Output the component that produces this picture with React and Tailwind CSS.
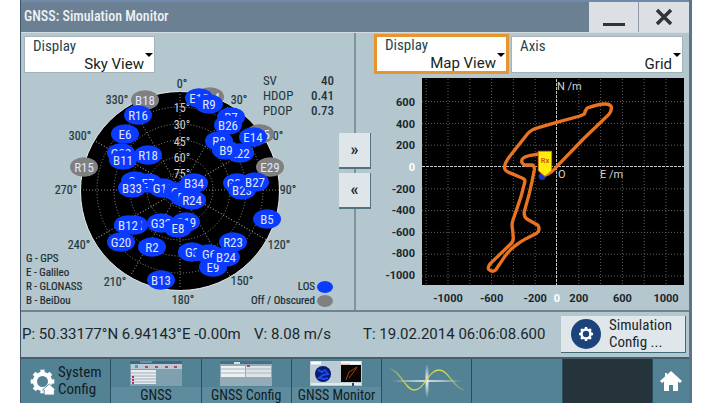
import React, { useState } from "react";

const LOS = "#0b3bff";
const OBSCURED = "#808080";

// Azimuth captions around the sky plot
const azimuths = [
  { text: "0°", x: 182, y: 84 },
  { text: "30°", x: 239, y: 100 },
  { text: "60°", x: 275, y: 136 },
  { text: "90°", x: 288, y: 190 },
  { text: "120°", x: 279, y: 245 },
  { text: "150°", x: 242, y: 281 },
  { text: "180°", x: 183, y: 300 },
  { text: "210°", x: 115, y: 282 },
  { text: "240°", x: 79, y: 245 },
  { text: "270°", x: 66, y: 190 },
  { text: "300°", x: 80, y: 136 },
  { text: "330°", x: 117, y: 100 },
];

const elevations = [
  { text: "15°", y: 108, r: 83 },
  { text: "30°", y: 125, r: 66 },
  { text: "45°", y: 142, r: 50 },
  { text: "60°", y: 158, r: 33 },
  { text: "75°", y: 174, r: 17 },
];

// Painted in this order, later satellites cover earlier ones
const satellites = [
  { id: "B18", x: 145, y: 100, off: true },
  { id: "R16", x: 138, y: 115 },
  { id: "E6", x: 125, y: 134 },
  { id: "G22", x: 121, y: 153 },
  { id: "B11", x: 123, y: 160 },
  { id: "R18", x: 148, y: 155 },
  { id: "R15", x: 84, y: 167, off: true },
  { id: "G1", x: 135, y: 181 },
  { id: "E7", x: 148, y: 183 },
  { id: "B33", x: 132, y: 188 },
  { id: "G11", x: 163, y: 188 },
  { id: "R14", x: 210, y: 97, off: true },
  { id: "E15", x: 199, y: 98 },
  { id: "R9", x: 209, y: 104 },
  { id: "B7", x: 231, y: 117 },
  { id: "B26", x: 228, y: 125 },
  { id: "B15", x: 260, y: 134, off: true },
  { id: "E14", x: 253, y: 137 },
  { id: "E22", x: 240, y: 153 },
  { id: "R8", x: 219, y: 141 },
  { id: "B9", x: 226, y: 150 },
  { id: "E29", x: 270, y: 167, off: true },
  { id: "G31", x: 237, y: 183 },
  { id: "B23", x: 242, y: 190 },
  { id: "B27", x: 255, y: 182 },
  { id: "G7", x: 178, y: 192 },
  { id: "E4", x: 184, y: 197 },
  { id: "B34", x: 194, y: 183 },
  { id: "R24", x: 192, y: 200 },
  { id: "B21", x: 134, y: 225 },
  { id: "B12", x: 128, y: 225 },
  { id: "G20", x: 121, y: 242 },
  { id: "R2", x: 152, y: 247 },
  { id: "G32", x: 161, y: 223 },
  { id: "G19", x: 186, y: 222 },
  { id: "E8", x: 178, y: 228 },
  { id: "B13", x: 161, y: 280 },
  { id: "B5", x: 267, y: 219 },
  { id: "R23", x: 233, y: 242 },
  { id: "G3", x: 192, y: 252 },
  { id: "G6", x: 209, y: 254 },
  { id: "E9", x: 213, y: 267 },
  { id: "B24", x: 226, y: 257 },
];

const systems = ["G - GPS", "E - Galileo", "R - GLONASS", "B - BeiDou"];

const dop = [
  ["SV", "40"],
  ["HDOP", "0.41"],
  ["PDOP", "0.73"],
];

function SelectBox({ id, label, options, active, className }) {
  const [value, setValue] = useState(options[0]);
  return (
    <div
      className={`relative flex flex-col bg-white ${
        active ? "h-10 border-3 border-[#e6952f]" : "mt-0.5 h-[37px] border border-[#a3b4bb] pt-px"
      } ${className}`}
    >
      <label htmlFor={id} className="pl-2 text-[15px] leading-4 text-[#24454f] font-[Roboto_Condensed,Liberation_Sans_Narrow,Roboto,sans-serif]">
        {label}
      </label>
      <select
        id={id}
        value={value}
        onChange={(e) => setValue(e.target.value)}
        className="mt-0.5 w-full appearance-none bg-transparent pr-2.5 text-right text-[15px] leading-4 text-[#161f24] outline-none [text-align-last:right]"
      >
        {options.map((o) => (
          <option key={o}>{o}</option>
        ))}
      </select>
      <span className="pointer-events-none absolute right-px top-4 border-x-4 border-t-4 border-x-transparent border-t-black" />
    </div>
  );
}

function SkyPlot() {
  const cx = 180;
  const cy = 190;
  return (
    <svg viewBox="21 74 333 236" className="block w-full font-[Roboto_Condensed,Liberation_Sans_Narrow,Roboto,sans-serif]" fontSize="12" textAnchor="middle">
      <circle cx={cx} cy={cy + 1} r="99.5" fill="#000" stroke="#e4ecee" strokeWidth="1" />
      <g fill="none" stroke="#9a9a9a" strokeWidth="0.9" strokeDasharray="1 2">
        {elevations.map((e) => (
          <circle key={e.r} cx={cx} cy={cy} r={e.r} />
        ))}
        {[0, 30, 60, 90, 120, 150].map((a) => (
          <line key={a} x1={cx} x2={cx} y1={cy - 99} y2={cy + 99} transform={`rotate(${a} ${cx} ${cy})`} />
        ))}
      </g>
      <g fill="#24363d" stroke="#24363d" strokeWidth="0.2">
        {azimuths.map((a) => (
          <text key={a.text} x={a.x} y={a.y + 4}>
            {a.text}
          </text>
        ))}
      </g>
      <g fill="#d0d0d0">
        {elevations.map((e) => (
          <text key={e.text} x={cx + 2} y={e.y + 4}>
            {e.text}
          </text>
        ))}
      </g>
      {satellites.map((s) => (
        <g key={s.id}>
          <ellipse cx={s.x} cy={s.y} rx="14" ry="9.8" fill={s.off ? OBSCURED : LOS} />
          <text x={s.x} y={s.y + 5} fontSize="13" fill="#dfe5ff">
            {s.id}
          </text>
        </g>
      ))}
      {/* Legend */}
      <g fontSize="11" fill="#1c2b31" stroke="#1c2b31" strokeWidth="0.2">
        <g textAnchor="start">
          {systems.map((t, i) => (
            <text key={t} x="26" y={262 + i * 14}>
              {t}
            </text>
          ))}
        </g>
        <g textAnchor="end">
          <text x="315" y="290">LOS</text>
          <text x="315" y="304">Off / Obscured</text>
        </g>
      </g>
      <ellipse cx="325" cy="287" rx="8" ry="6" fill={LOS} />
      <ellipse cx="325" cy="301" rx="8" ry="6" fill={OBSCURED} />
    </svg>
  );
}

function MapPlot() {
  const ox = 557;
  const oy = 167;
  const step = 21.8;
  const cols = [-6, -5, -4, -3, -2, -1, 1, 2, 3, 4, 5];
  const rows = [3, 2, 1, -1, -2, -3, -4, -5];
  return (
    <svg viewBox="356 74 333 236" className="block w-full" fontSize="11" fontWeight="700">
      <rect x="422" y="78" width="262" height="207" fill="#000" />
      <g stroke="#6a6a6a" strokeWidth="0.9" strokeDasharray="1 2">
        {cols.map((c) => (
          <line key={c} x1={ox + c * step} x2={ox + c * step} y1="79" y2="285" />
        ))}
        {rows.map((r) => (
          <line key={r} y1={oy - r * step} y2={oy - r * step} x1="422" x2="684" />
        ))}
      </g>
      <g stroke="#c4c4c4" strokeWidth="1" strokeDasharray="3 1">
        <line x1={ox - 0.5} x2={ox - 0.5} y1="79" y2="285" />
        <line x1="422" x2="684" y1={oy - 0.5} y2={oy - 0.5} />
      </g>
      <g fill="#1a262b" textAnchor="end">
        {rows.map((r) => (
          <text key={r} x="415" y={oy + 4 - r * 21.6}>
            {r * 200}
          </text>
        ))}
        <text x="415" y={oy + 4} fill="#fff">0</text>
      </g>
      <g fill="#1a262b" textAnchor="middle">
        {[-5, -3, -1, 1, 3, 5].map((c) => (
          <text key={c} x={ox + c * step} y="302">
            {c * 200}
          </text>
        ))}
        <text x={ox} y="302" fill="#fff">0</text>
      </g>
      <g fill="#d4d4d4" fontWeight="400">
        <text x="557" y="90">N /m</text>
        <text x="600" y="178">E /m</text>
        <text x="558" y="178">O</text>
      </g>
      {/* Track */}
      <g transform="translate(370 70) scale(0.3333)">
        <path
          d="M526 316 Q548 307 560 290 L640 207 L716 134 Q726 122 724 110 Q718 101 704 102 Q690 101 652 114 Q646 120 643 132 L630 138 L560 157 L505 173 Q485 178 474 190 L420 258 Q402 280 404 296 Q406 303 418 308 L458 325 Q467 328 464 338 L453 380 L429 450 Q424 465 428 480 L430 505 Q430 517 418 526 L364 578 Q352 588 356 598 Q366 608 377 600 L404 560 Q418 540 436 527 Q450 516 468 506 L500 490 Q512 480 504 466 L472 448 Q461 441 463 425 L478 370 L486 335 L493 300 Q494 286 486 285 L465 285 Q451 280 457 267 Q464 259 482 256 L506 252"
          fill="none"
          stroke="#ea7321"
          strokeWidth="10"
          strokeLinejoin="round"
          strokeLinecap="round"
        />
        <circle cx="517" cy="319" r="11" fill="#1438c8" />
        <path d="M505 244H545V302L525 319L505 302Z" fill="#ffee0a" stroke="#e8741c" strokeWidth="3" />
        <text x="525" y="280" fill="#cf5a10" fontSize="22" textAnchor="middle">Rx</text>
      </g>
    </svg>
  );
}

function Gear({ className, children }) {
  return (
    <svg viewBox="0 0 32 32" className={className} fill="none" stroke="currentColor">
      <circle cx="16" cy="16" r="9" strokeWidth="5" />
      <g strokeWidth="5">
        {[0, 45, 90, 135, 180, 225, 270, 315].map((a) => (
          <path key={a} d="M16 2V6" transform={`rotate(${a} 16 16)`} />
        ))}
      </g>
      {children}
    </svg>
  );
}

// Thumbnails of the open dialogs
const thumbs = {
  gnss: (
    <svg viewBox="0 0 52 25" className="w-[52px]">
      <rect width="52" height="25" fill="#7fa0af" />
      <rect width="52" height="3" fill="#3f6880" />
      <path d="M10 1H22" stroke="#96bccb" />
      <rect x="1" y="3" width="51" height="5" fill="#b9c8d2" />
      <rect x="5" y="4" width="3" height="3" fill="#20aee0" />
      <path d="M15 6H18M25 6H28M35 6H38M44 6H47" stroke="#b04868" strokeWidth="2" />
      <rect x="1" y="9" width="25" height="14" fill="#e8ecef" />
      <path d="M1 12H26M1 15H26M1 18H26M1 21H26" stroke="#9fadb8" />
      <path d="M2 16H4M2 19H4M2 22H4" stroke="#b03060" strokeWidth="2" />
    </svg>
  ),
  config: (
    <svg viewBox="0 0 52 25" className="w-[52px]">
      <rect width="52" height="25" fill="#93abb7" />
      <rect width="52" height="3" fill="#4a6e85" />
      <path d="M14 2H20" stroke="#d5e0e5" strokeWidth="2" />
      <rect x="1" y="5" width="24" height="11" fill="#edf1f2" />
      <rect x="26" y="5" width="25" height="11" fill="#dde4e8" />
      <path d="M1 8H51M1 12H51" stroke="#a7b6bf" />
      <path d="M27 5H30" stroke="#b04868" strokeWidth="2" />
    </svg>
  ),
  monitor: (
    <svg viewBox="0 0 52 25" className="w-[52px]">
      <rect width="52" height="25" fill="#bccbd4" />
      <path d="M1 2H11M31 2H51" stroke="#fff" strokeWidth="3" />
      <path d="M31 3H40" stroke="#e6b36c" />
      <circle cx="13" cy="13" r="8" fill="#061a6e" />
      <path d="M8 9l4 2 3-2 3 4-5 1-4 3 5 1 4-1" stroke="#2049e8" strokeWidth="2" fill="none" />
      <rect x="31" y="4" width="20" height="17" fill="#080503" />
      <path d="M36 19L39 11L47 6L43 12L39 17" stroke="#9e431c" fill="none" />
      <path d="M1 23H51" stroke="#e3eaed" strokeWidth="2" />
      <path d="M43 22V25" stroke="#28406c" strokeWidth="2" />
    </svg>
  ),
};

function Task({ thumb, label }) {
  return (
    <button className="flex min-w-0 flex-col items-center justify-between overflow-hidden pt-0.5">
      {thumb}
      <span className="w-full whitespace-nowrap bg-[#5e8b9e] text-center leading-4">{label}</span>
    </button>
  );
}

export default function App() {
  return (
    <div className="bg-white pl-5 pr-[22px] font-[Roboto,sans-serif]">
      <div className="border-l border-r-3 border-l-[#40566a] border-r-[#5d7387] bg-[#b4c7ce]">
        {/* Title bar */}
        <header className="flex h-[33px] border-b border-t-2 border-b-[#d3dde1] border-t-[#7189ab] bg-[#6c8094]">
          <h1 className="flex-1 pl-[3px] text-sm font-medium leading-[29px] text-[#eef2f5] font-[Roboto_Condensed,Liberation_Sans_Narrow,Roboto,sans-serif]">
            GNSS: Simulation Monitor
          </h1>
          <button aria-label="Minimize" className="flex w-[50px] items-end justify-center border-r border-[#8e99a5] bg-[#dcdfe3] pb-1.5">
            <span className="h-[3px] w-[22px] bg-[#303337]" />
          </button>
          <button aria-label="Close" className="flex w-[50px] items-center justify-center bg-[#dcdfe3]">
            <svg viewBox="0 0 18 18" className="w-[18px]" stroke="#303337" strokeWidth="3.5">
              <path d="M2 2L16 16M16 2L2 16" />
            </svg>
          </button>
        </header>

        {/* Views */}
        <main className="relative flex border-b-2 border-[#6f858c]">
          <section className="relative min-w-0 flex-1">
            <div className="flex h-[41px] pl-[3px] pt-px">
              <SelectBox id="left-view" label="Display" options={["Sky View", "Map View"]} className="w-[131px]" />
            </div>
            <SkyPlot />
            <table className="absolute right-5 top-10 text-[13px] leading-[15px] text-[#24363d] font-[Roboto_Condensed,Liberation_Sans_Narrow,Roboto,sans-serif]">
              <tbody>
                {dop.map(([name, value]) => (
                  <tr key={name}>
                    <th className="w-12 p-0 text-left font-normal">{name}</th>
                    <td className="p-0 text-right font-medium">{value}</td>
                  </tr>
                ))}
              </tbody>
            </table>
          </section>
          <div className="w-0.5 bg-[#7d959d]" />
          <section className="min-w-0 flex-1">
            <div className="flex h-[41px] gap-0.5 pl-[18px] pr-1.5 pt-px">
              <SelectBox id="right-view" label="Display" options={["Map View", "Sky View"]} active className="w-[135px]" />
              <SelectBox id="axis" label="Axis" options={["Grid", "Degrees"]} className="min-w-0 flex-1" />
            </div>
            <MapPlot />
          </section>
          <div className="absolute left-1/2 top-[100px] flex -translate-x-1/2 flex-col gap-1 text-base font-bold leading-4 text-[#1a262b]">
            <button aria-label="Expand left" className="h-9 w-8 border-b-2 border-r border-[#4f7480] bg-[#dfe6e9]">»</button>
            <button aria-label="Expand right" className="h-9 w-8 border-b-2 border-r border-[#4f7480] bg-[#dfe6e9]">«</button>
          </div>
        </main>

        {/* Receiver state */}
        <div className="flex h-[47px] items-center border-b-2 border-[#44606d] pr-[3px] text-[15px] text-[#1a262b]">
          <span className="w-[233px] whitespace-nowrap pl-px">P: 50.33177°N 6.94143°E -0.00m</span>
          <span className="w-[109px] whitespace-nowrap">V: 8.08 m/s</span>
          <span className="flex-1 whitespace-nowrap">T: 19.02.2014 06:06:08.600</span>
          <button className="flex h-[37px] w-[125px] items-center gap-2 whitespace-nowrap border-b border-r border-[#3d6c7a] bg-[#e0e7ea] pl-2.5 text-left text-[15px] leading-[17px] font-[Roboto_Condensed,Liberation_Sans_Narrow,Roboto,sans-serif]">
            <span className="flex size-[30px] items-center justify-center rounded-full bg-[#1d437c] text-white">
              <Gear className="size-4" />
            </span>
            <span>
              Simulation
              <br />
              Config ...
            </span>
          </button>
        </div>

        {/* Task bar */}
        <nav className="grid h-11 grid-cols-[repeat(7,minmax(0,1fr))_36px] divide-x divide-[#284e60] bg-[#538295] text-sm text-[#101c22] font-[Roboto_Condensed,Liberation_Sans_Narrow,Roboto,sans-serif]">
          <button className="flex min-w-0 items-center gap-0.5 pl-2 text-left text-[15px] leading-[17px]">
            <Gear className="size-[27px] shrink-0 text-white">
              <path d="M24 19L32 26H30V32H18V26H16Z" fill="currentColor" stroke="#538295" strokeWidth="1" />
            </Gear>
            <span>
              System
              <br />
              Config
            </span>
          </button>
          <Task thumb={thumbs.gnss} label="GNSS" />
          <Task thumb={thumbs.config} label="GNSS Config" />
          <Task thumb={thumbs.monitor} label="GNSS Monitor" />
          <button aria-label="Signal" className="flex min-w-0 items-center justify-center">
            <svg viewBox="0 0 76 32" className="w-[76px]">
              <defs>
                <linearGradient id="fade">
                  <stop offset="0" stopColor="#cfd94a" stopOpacity="0.2" />
                  <stop offset="0.25" stopColor="#cfd94a" />
                  <stop offset="0.75" stopColor="#cfd94a" />
                  <stop offset="1" stopColor="#cfd94a" stopOpacity="0.2" />
                </linearGradient>
                <radialGradient id="glow">
                  <stop offset="0" stopColor="#fff" />
                  <stop offset="1" stopColor="#fff" stopOpacity="0" />
                </radialGradient>
              </defs>
              <ellipse cx="38" cy="16" rx="38" ry="1.5" fill="url(#glow)" />
              <ellipse cx="38" cy="16" rx="2.5" ry="18" fill="url(#glow)" />
              <path d="M1 4C12 6 16 25 25 25C36 25 39 5 50 5C60 5 64 23 75 25" fill="none" stroke="url(#fade)" strokeWidth="1.3" />
            </svg>
          </button>
          <button aria-label="Empty slot" className="min-w-0" />
          <div className="min-w-0 bg-[#25333b]" />
          <button aria-label="Home" className="flex items-center justify-center">
            <svg viewBox="0 0 22 22" className="w-[22px]" fill="#fff">
              <path d="M11 1L22 11L20 13L18 11.500V21H13V15H9V21H4V11.500L2 13L0 11L5 6.500V3H7V4.700Z" />
            </svg>
          </button>
        </nav>
      </div>
    </div>
  );
}
